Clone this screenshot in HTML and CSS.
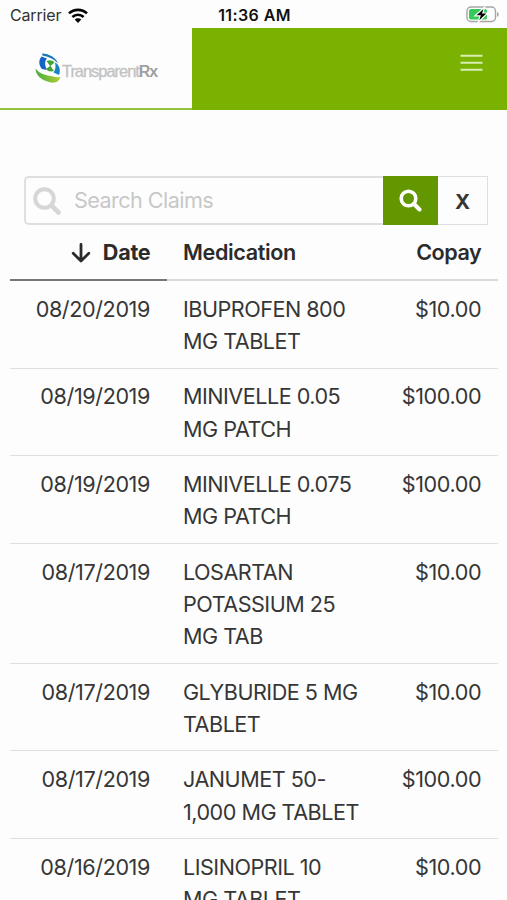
FILE: index.html
```html
<!DOCTYPE html>
<html lang="en">
<head>
<meta charset="utf-8">
<meta name="viewport" content="width=device-width, initial-scale=1">
<title>Claims</title>
<link rel="stylesheet" href="styles.css">
</head>
<body>
<div class="status">
  <div class="carrier"><span>Carrier</span>
    <svg width="20" height="15" viewBox="0 0 20 15"><g fill="none" stroke="#050505" stroke-width="2.7"><path d="M1 5.4a13 13 0 0 1 18 0"/><path d="M4.400 9a8.100 8.100 0 0 1 11.200 0"/></g><path d="M6.700 11.600a4.700 4.700 0 0 1 6.600 0L10 15z" fill="#050505"/></svg>
  </div>
  <div class="clock">11:36 AM</div>
  <svg class="battery" width="33" height="17" viewBox="0 0 33 17"><rect x="1" y="1" width="28.500" height="14.500" rx="4" fill="#fff" stroke="#a5a5a5" stroke-width="1.400"/><path d="M31 6v5q1.800-.8 1.800-2.500T31 6z" fill="#a5a5a5"/><rect x="3" y="3" width="18" height="10.500" rx="2" fill="#35cb59"/><path d="M17.500 3 10.500 9.300h4.300l-1.500 5 7-6.700h-4.300z" fill="#050505" stroke="#fff" stroke-width="2.400" paint-order="stroke"/></svg>
</div>
<header class="nav">
  <div class="brand">
    <svg class="mark" width="27" height="31" viewBox="0 0 27 31"><defs><linearGradient id="leaf"><stop stop-color="#48ac43"/><stop offset="1" stop-color="#b0cf34"/></linearGradient></defs><path d="M7 .5C14 .8 21 4.500 23 10.500 18.500 5.500 13 3.500 7.500 2.500z" fill="#1674b8"/><path d="M6.500 3.500l5.500 2C9.500 8 9.500 12 12 17L7 16C3.500 12 3.500 7 6.500 3.500z" fill="#1264c4"/><path d="M20 9.500C24.500 12 26 17 24 22L18.500 19.500C20.500 17 21 13.500 20 9.500z" fill="#1683c5"/><path d="M11.500 8c3-1.500 6-1 8 1.500L15.500 13l3.500 5c-3 1-6 .5-8-2l4-3z" fill="#43a634"/><path d="M.500 15.500C4 20 8 21.500 13 22.500c4.500.8 8 2.300 12.500 1.500-1.500 5.500-6.500 6.500-11.500 5C6 27 .500 22 .500 15.500z" fill="url(#leaf)"/></svg>
    <span class="wordmark">Transparent<b>Rx</b></span>
  </div>
  <svg class="menu" width="23" height="18" viewBox="0 0 23 18"><path d="M.5 1.700h22M.5 8.700h22M.5 15.700h22" stroke="#d9edb5" stroke-width="2"/></svg>
</header>
<main>
  <div class="search">
    <div class="field">
      <svg width="28" height="28" viewBox="0 0 28 28" fill="none" stroke="#d6d6d6"><circle cx="11.500" cy="11.500" r="9.300" stroke-width="4"/><path d="m18.500 18.500 7 7" stroke-width="4.600" stroke-linecap="round"/></svg>
      <span>Search Claims</span>
    </div>
    <div class="go"><svg width="23" height="23" viewBox="0 0 23 23" fill="none" stroke="#fff"><circle cx="9.500" cy="9.500" r="7.300" stroke-width="3.600"/><path d="m15 15 5.500 5.500" stroke-width="4" stroke-linecap="round"/></svg></div>
    <div class="clear">X</div>
  </div>
  <div class="table">
    <div class="row head">
      <div class="date"><svg width="20" height="20" viewBox="0 0 20 20" fill="none" stroke="#2b2b2b" stroke-width="2.800" stroke-linecap="round" stroke-linejoin="round"><path d="M10 1.500v16.500M2.200 10.300l7.800 7.700 7.800-7.700"/></svg><span>Date</span></div><div class="med"><span>Medication</span></div><div class="pay"><span>Copay</span></div>
    </div>
    <div class="row"><div class="date">08/20/2019</div><div class="med">IBUPROFEN 800<br>MG TABLET</div><div class="pay">$10.00</div></div>
    <div class="row"><div class="date">08/19/2019</div><div class="med">MINIVELLE 0.05<br>MG PATCH</div><div class="pay">$100.00</div></div>
    <div class="row"><div class="date">08/19/2019</div><div class="med">MINIVELLE 0.075<br>MG PATCH</div><div class="pay">$100.00</div></div>
    <div class="row tall"><div class="date">08/17/2019</div><div class="med">LOSARTAN<br>POTASSIUM 25<br>MG TAB</div><div class="pay">$10.00</div></div>
    <div class="row"><div class="date">08/17/2019</div><div class="med">GLYBURIDE 5 MG<br>TABLET</div><div class="pay">$10.00</div></div>
    <div class="row"><div class="date">08/17/2019</div><div class="med">JANUMET 50-<br>1,000 MG TABLET</div><div class="pay">$100.00</div></div>
    <div class="row"><div class="date">08/16/2019</div><div class="med">LISINOPRIL 10<br>MG TABLET</div><div class="pay">$10.00</div></div>
  </div>
</main>
</body>
</html>
```
FILE: styles.css
```css
* { box-sizing: border-box; }
body {
  margin: 0;
  height: 900px;
  overflow: hidden;
  background: #fdfdfd;
  color: #363636;
  font-family: Inter, "Liberation Sans", sans-serif;
  font-size: 21.6px;
  line-height: 32.4px;
}
svg { display: block; flex: none; }
.status {
  display: grid;
  grid-template-columns: 1fr auto 1fr;
  align-items: center;
  height: 28px;
  padding: 1px 8px 0 10px;
  font-size: 16px;
  line-height: 28px;
}
.carrier { display: flex; align-items: center; gap: 7px; color: #333; letter-spacing: -.15px; }
.clock { font-weight: 600; color: #111; letter-spacing: .4px; }
.battery { justify-self: end; margin-top: -1px; }
.nav {
  display: flex;
  justify-content: space-between;
  height: 82px;
  background: #79b200;
}
.brand {
  display: flex;
  width: 192px;
  padding: 25px 0 0 35px;
  background: #fdfdfd;
  border-bottom: 2px solid #93c43d;
}
.wordmark {
  margin-top: 3px;
  font-family: "Liberation Sans", sans-serif;
  font-size: 16.5px;
  line-height: 30px;
  letter-spacing: -1.05px;
  color: #c2c2c2;
  -webkit-text-stroke: .3px #c2c2c2;
}
.wordmark b { font-size: 16px; letter-spacing: -1.2px; color: #a0a0a0; -webkit-text-stroke: 0; }
.menu { margin: 26px 24px 0 0; }
.search { display: flex; height: 49px; margin: 66px 19px 0 24px; }
.field {
  display: flex;
  align-items: center;
  gap: 13px;
  width: 359px;
  padding-left: 7px;
  border: 2px solid #dfdfdf;
  border-right: 0;
  border-radius: 5px 0 0 5px;
  color: #c8c8c8;
  letter-spacing: -.56px;
}
.go { display: flex; align-items: center; justify-content: center; width: 55px; background: #629700; }
.clear {
  flex: 1;
  padding-top: 2px;
  border: 1.5px solid #dfdfdf;
  border-left: 0;
  font-weight: 700;
  font-size: 20.5px;
  line-height: 46px;
  text-align: center;
}
.table { margin: 0 9px 0 10px; }
.row { display: grid; grid-template-columns: 157px 1fr 112px; }
.row > div { height: 87.6px; padding: 11.8px 16px 0; border-bottom: 1.6px solid #dfdfdf; white-space: nowrap; }
.row > .date { padding-right: 17px; text-align: right; letter-spacing: -.4px; }
.row > .med { letter-spacing: -.5px; }
.row > .pay { padding-right: 16.8px; padding-left: 0; text-align: right; letter-spacing: -.4px; }
.row.tall > div { height: 120px; }
.row.head { font-weight: 600; color: #2b2b2b; }
.row.head > div { height: 56px; padding-top: 11px; border-bottom: 2.5px solid #dadada; }
.row.head > .date { display: flex; align-items: center; justify-content: flex-end; gap: 12px; padding-right: 16.5px; padding-bottom: 10px; font-weight: 700; letter-spacing: -.25px; border-bottom-color: #777; }
.row.head > .med { letter-spacing: -.38px; }
.row.head > .pay { letter-spacing: -.5px; }
```
